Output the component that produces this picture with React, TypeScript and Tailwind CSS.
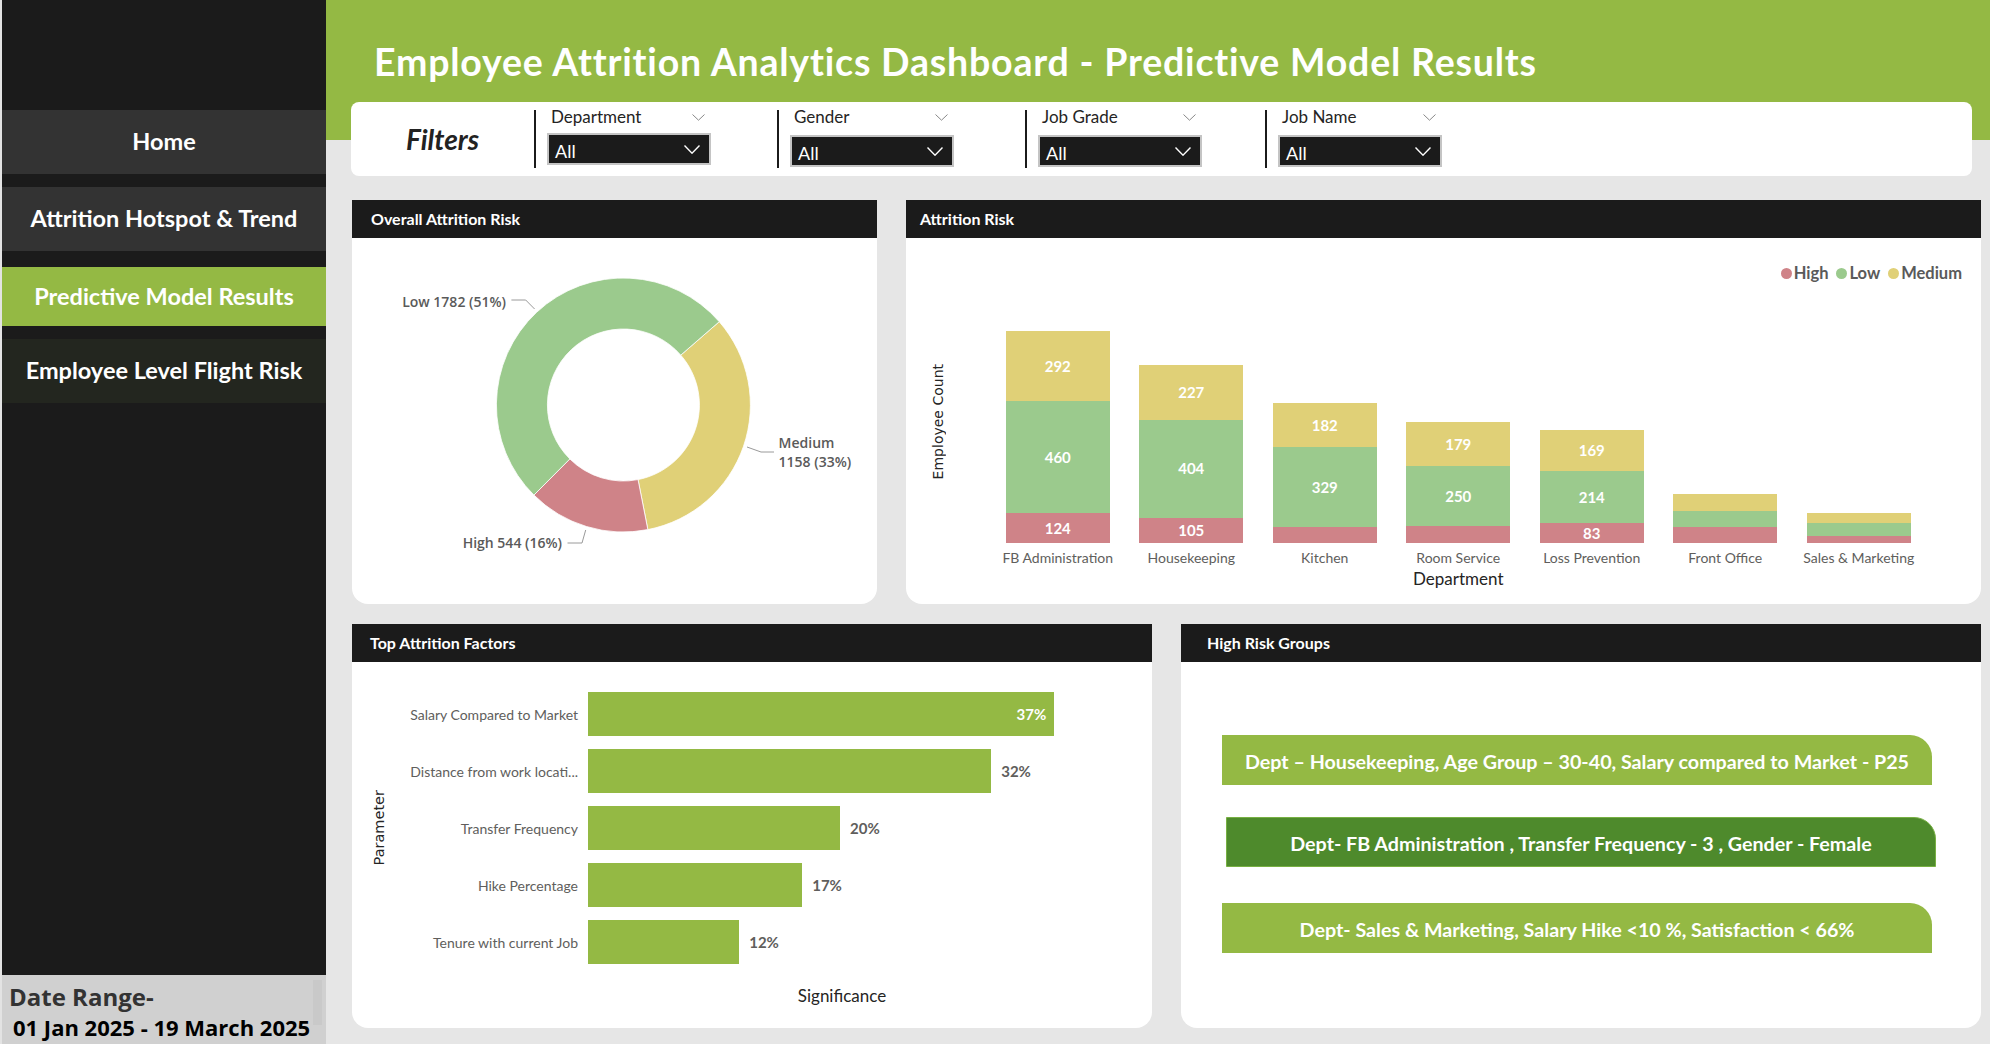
import React from 'react';

type Dept = {
  name: string;
  high: number;
  low: number;
  med: number;
  showHigh: boolean;
  showVals: boolean;
};

const depts: Dept[] = [
  { name: 'FB Administration', high: 124, low: 460, med: 292, showHigh: true, showVals: true },
  { name: 'Housekeeping', high: 105, low: 404, med: 227, showHigh: true, showVals: true },
  { name: 'Kitchen', high: 66, low: 329, med: 182, showHigh: false, showVals: true },
  { name: 'Room Service', high: 69, low: 250, med: 179, showHigh: false, showVals: true },
  { name: 'Loss Prevention', high: 83, low: 214, med: 169, showHigh: true, showVals: true },
  { name: 'Front Office', high: 66, low: 66, med: 72, showHigh: false, showVals: false },
  { name: 'Sales & Marketing', high: 27, low: 55, med: 41, showHigh: false, showVals: false },
];

const factors = [
  { label: 'Salary Compared to Market', value: 37 },
  { label: 'Distance from work locati...', value: 32 },
  { label: 'Transfer Frequency', value: 20 },
  { label: 'Hike Percentage', value: 17 },
  { label: 'Tenure with current Job', value: 12 },
];

const filters = [
  { label: 'Department', w: 243, top: 9 },
  { label: 'Gender', w: 248, top: 11 },
  { label: 'Job Grade', w: 240, top: 11 },
  { label: 'Job Name', w: 200, top: 11 },
];

// px per employee in the stacked column chart
const SCALE = 0.2424;

const Chevron = ({ w, h, color, sw }: { w: number; h: number; color: string; sw: number }) => (
  <svg width={w} height={h} viewBox={`0 0 ${w} ${h}`} fill="none">
    <path d={`M0.5 0.5 L${w / 2} ${h - 0.8} L${w - 0.5} 0.5`} stroke={color} strokeWidth={sw} />
  </svg>
);

function polar(cx: number, cy: number, rad: number, deg: number) {
  const a = (deg * Math.PI) / 180;
  return [cx + rad * Math.sin(a), cy - rad * Math.cos(a)];
}

function slice(cx: number, cy: number, R: number, r: number, a0: number, a1: number) {
  const large = a1 - a0 > 180 ? 1 : 0;
  const [x0, y0] = polar(cx, cy, R, a0);
  const [x1, y1] = polar(cx, cy, R, a1);
  const [x2, y2] = polar(cx, cy, r, a1);
  const [x3, y3] = polar(cx, cy, r, a0);
  return `M${x0} ${y0} A${R} ${R} 0 ${large} 1 ${x1} ${y1} L${x2} ${y2} A${r} ${r} 0 ${large} 0 ${x3} ${y3} Z`;
}

const PanelHeader = ({ title, pl }: { title: string; pl: string }) => (
  <div className={`flex h-[38px] items-center bg-[#1b1b1b] ${pl} text-[16px] font-bold text-white`}>
    {title}
  </div>
);

function Sidebar() {
  const nav = [
    { label: 'Home', cls: 'h-[64px] bg-[#333333]' },
    { label: 'Attrition Hotspot & Trend', cls: 'mt-[13px] h-[64px] bg-[#333333]' },
    { label: 'Predictive Model Results', cls: 'mt-[16px] h-[59px] bg-[#94b944]' },
    { label: 'Employee Level Flight Risk', cls: 'mt-[13px] h-[64px] bg-[#23261f]' },
  ];
  return (
    <aside className="relative flex h-full w-[326px] shrink-0 flex-col border-l-2 border-[#e3e3e3] bg-[#1b1b1b]">
      <nav className="pt-[110px]">
        {nav.map((n) => (
          <div key={n.label} className={`flex items-center justify-center ${n.cls} text-[23.5px] font-bold text-white`}>
            {n.label}
          </div>
        ))}
      </nav>
      <div className="flex-1" />
      <div className="relative h-[69px] bg-[#d0d0d0] pl-[7px] pt-[10px] font-['Open_Sans',sans-serif] font-bold">
        <div className="text-[24px] leading-none text-[#333333]">Date Range-</div>
        <div className="mt-[7px] pl-[4px] text-[22px] leading-none text-black">01 Jan 2025 - 19 March 2025</div>
        <div className="absolute right-[4px] top-[5px] h-[45px] w-[9px] bg-[#c9c9c9]" />
      </div>
    </aside>
  );
}

function FilterBar() {
  return (
    <div className="ml-[-1px] flex h-[74px] w-[1621px] items-start rounded-[8px] bg-white">
      <div className="flex h-full w-[183px] items-center justify-center text-[28px] font-bold italic text-[#222]">
        Filters
      </div>
      {filters.map((f) => (
        <div key={f.label} className="flex shrink-0 pt-[8px]" style={{ width: f.w }}>
          <div className="h-[58px] w-[2px] bg-[#1b1b1b]" />
          <div className="ml-[11px] w-[164px]">
            <div className="flex h-[14px] items-center justify-between pl-[4px] pr-[6px] text-[17px] text-[#252423]">
              <span>{f.label}</span>
              <Chevron w={13} h={7} color="#888" sw={1} />
            </div>
            <div
              className="flex h-[32px] items-center justify-between border-2 border-[#c4c4c4] bg-[#1b1b1b] pl-[6px] pr-[9px] text-[18px] text-white"
              style={{ marginTop: f.top }}
            >
              <span className="pt-[4px]">All</span>
              <Chevron w={16} h={9} color="#fff" sw={1.4} />
            </div>
          </div>
        </div>
      ))}
    </div>
  );
}

function DonutPanel() {
  const cx = 271.4;
  const cy = 167;
  const R = 127;
  const r = 76;
  return (
    <div className="flex w-[525px] shrink-0 flex-col overflow-hidden rounded-b-[16px] bg-white">
      <PanelHeader title="Overall Attrition Risk" pl="pl-[19px]" />
      <svg width={525} height={366} viewBox="0 0 525 366" className="font-['Open_Sans',sans-serif]">
        <path d={slice(cx, cy, R, r, 49, 168.9)} fill="#e0d077" stroke="#fff" strokeWidth={0.8} />
        <path d={slice(cx, cy, R, r, 168.9, 224.8)} fill="#cf8388" stroke="#fff" strokeWidth={0.8} />
        <path d={slice(cx, cy, R, r, 224.8, 409)} fill="#9bca8d" stroke="#fff" strokeWidth={0.8} />
        <polyline points="159.4,62 173.7,62 182.6,71" fill="none" stroke="#9a9a9a" strokeWidth={1} />
        <polyline points="395,209 409,214 422,214" fill="none" stroke="#9a9a9a" strokeWidth={1} />
        <polyline points="215.5,305 230,305 233.7,292" fill="none" stroke="#9a9a9a" strokeWidth={1} />
        <g fill="#5a5a5a" fontSize={14} fontWeight={600}>
          <text x={154} y={69} textAnchor="end">Low 1782 (51%)</text>
          <text x={426.6} y={210}>Medium</text>
          <text x={426.6} y={229}>1158 (33%)</text>
          <text x={210} y={310} textAnchor="end">High 544 (16%)</text>
        </g>
      </svg>
    </div>
  );
}

function ColumnPanel() {
  return (
    <div className="flex w-[1075px] shrink-0 flex-col overflow-hidden rounded-b-[16px] bg-white">
      <PanelHeader title="Attrition Risk" pl="pl-[14px]" />
      <div className="mt-[25px] flex h-[20px] items-center justify-end gap-[8px] pr-[19px] text-[16.5px] font-bold text-[#5a5a5a]">
        {[
          { k: 'High', c: 'bg-[#cf8388]' },
          { k: 'Low', c: 'bg-[#9bca8d]' },
          { k: 'Medium', c: 'bg-[#e0d077]' },
        ].map((l) => (
          <div key={l.k} className="flex items-center gap-[2px]">
            <span className={`inline-block h-[11px] w-[11px] rounded-full ${l.c}`} />
            <span>{l.k}</span>
          </div>
        ))}
      </div>
      <div className="flex">
        <div className="flex h-[260px] w-[85px] shrink-0 items-center pl-[25px] pt-[18px]">
          <span className="rotate-180 font-['DejaVu_Sans',sans-serif] text-[14px] leading-[14px] text-[#252525] [writing-mode:vertical-rl]">
            Employee Count
          </span>
        </div>
        <div>
          <div className="grid h-[260px] grid-cols-[repeat(7,133.5px)] items-end">
            {depts.map((d) => (
              <div key={d.name} className="flex justify-center">
                <div className="flex w-[104px] flex-col text-[15px] font-bold text-white">
                  <div className="flex items-center justify-center bg-[#e0d077]" style={{ height: d.med * SCALE }}>
                    {d.showVals ? d.med : null}
                  </div>
                  <div className="flex items-center justify-center bg-[#9bca8d]" style={{ height: d.low * SCALE }}>
                    {d.showVals ? d.low : null}
                  </div>
                  <div className="flex items-center justify-center bg-[#cf8388]" style={{ height: d.high * SCALE }}>
                    {d.showHigh ? d.high : null}
                  </div>
                </div>
              </div>
            ))}
          </div>
          <div className="mt-[5px] grid grid-cols-[repeat(7,133.5px)] text-[14px] leading-[20px] text-[#605e5c]">
            {depts.map((d) => (
              <div key={d.name} className="text-center">
                {d.name}
              </div>
            ))}
          </div>
          <div className="mt-[1px] text-center text-[17px] leading-[20px] text-[#252423]">Department</div>
        </div>
      </div>
    </div>
  );
}

function FactorsPanel() {
  return (
    <div className="flex w-[800px] shrink-0 flex-col overflow-hidden rounded-b-[16px] bg-white">
      <PanelHeader title="Top Attrition Factors" pl="pl-[18px]" />
      <div className="flex pt-[30px]">
        <div className="flex w-[54px] shrink-0 items-center justify-center">
          <span className="rotate-180 font-['DejaVu_Sans',sans-serif] text-[14.5px] leading-[15px] text-[#252525] [writing-mode:vertical-rl]">
            Parameter
          </span>
        </div>
        <div className="flex w-[172px] shrink-0 flex-col gap-[13px]">
          {factors.map((f) => (
            <div key={f.label} className="flex h-[44px] items-center justify-end whitespace-nowrap text-[14px] text-[#605e5c]">
              {f.label}
            </div>
          ))}
        </div>
        <div className="ml-[10px] flex w-[504px] flex-col gap-[13px]">
          {factors.map((f, i) => (
            <div key={f.label} className="flex h-[44px] items-center">
              <div
                className="flex h-full items-center justify-end bg-[#94b944] pr-[8px] text-[15px] font-bold text-white"
                style={{ width: f.value * 12.6 }}
              >
                {i === 0 ? `${f.value}%` : null}
              </div>
              {i > 0 && <span className="ml-[10px] text-[15px] font-bold text-[#605e5c]">{f.value}%</span>}
            </div>
          ))}
        </div>
      </div>
      <div className="ml-[236px] mt-[22px] w-[508px] text-center text-[17px] leading-[20px] text-[#252423]">
        Significance
      </div>
    </div>
  );
}

function RiskGroupsPanel() {
  const groups = [
    { text: 'Dept – Housekeeping, Age Group – 30-40, Salary compared to Market - P25', cls: 'mt-[73px] ml-[41px] bg-[#94b944]' },
    { text: 'Dept- FB Administration , Transfer Frequency - 3 , Gender - Female', cls: 'mt-[32px] ml-[45px] border border-[#78b043] bg-[#4e8a2c]' },
    { text: 'Dept- Sales & Marketing, Salary Hike <10 %, Satisfaction < 66%', cls: 'mt-[36px] ml-[41px] bg-[#94b944]' },
  ];
  return (
    <div className="flex w-[800px] shrink-0 flex-col overflow-hidden rounded-b-[16px] bg-white">
      <PanelHeader title="High Risk Groups" pl="pl-[26px]" />
      {groups.map((g) => (
        <div
          key={g.text}
          className={`flex h-[50px] w-[710px] items-center justify-center rounded-tr-[22px] ${g.cls} pt-[3px] text-[19.7px] font-bold text-white`}
        >
          {g.text}
        </div>
      ))}
    </div>
  );
}

export default function App() {
  return (
    <div className="flex h-[1044px] w-[1990px] overflow-hidden bg-[#e6e6e6] font-['Lato',sans-serif]">
      <Sidebar />
      <main className="flex flex-1 flex-col bg-[linear-gradient(#94b944_0_140px,#e6e6e6_140px)] pl-[26px]">
        <div className="h-[102px] pl-[22px] pt-[43px] text-[37.5px] font-bold leading-none tracking-[0.8px] text-white">
          Employee Attrition Analytics Dashboard - Predictive Model Results
        </div>
        <FilterBar />
        <div className="mt-[24px] flex h-[404px] gap-[29px]">
          <DonutPanel />
          <ColumnPanel />
        </div>
        <div className="mt-[20px] flex h-[404px] gap-[29px]">
          <FactorsPanel />
          <RiskGroupsPanel />
        </div>
      </main>
    </div>
  );
}
